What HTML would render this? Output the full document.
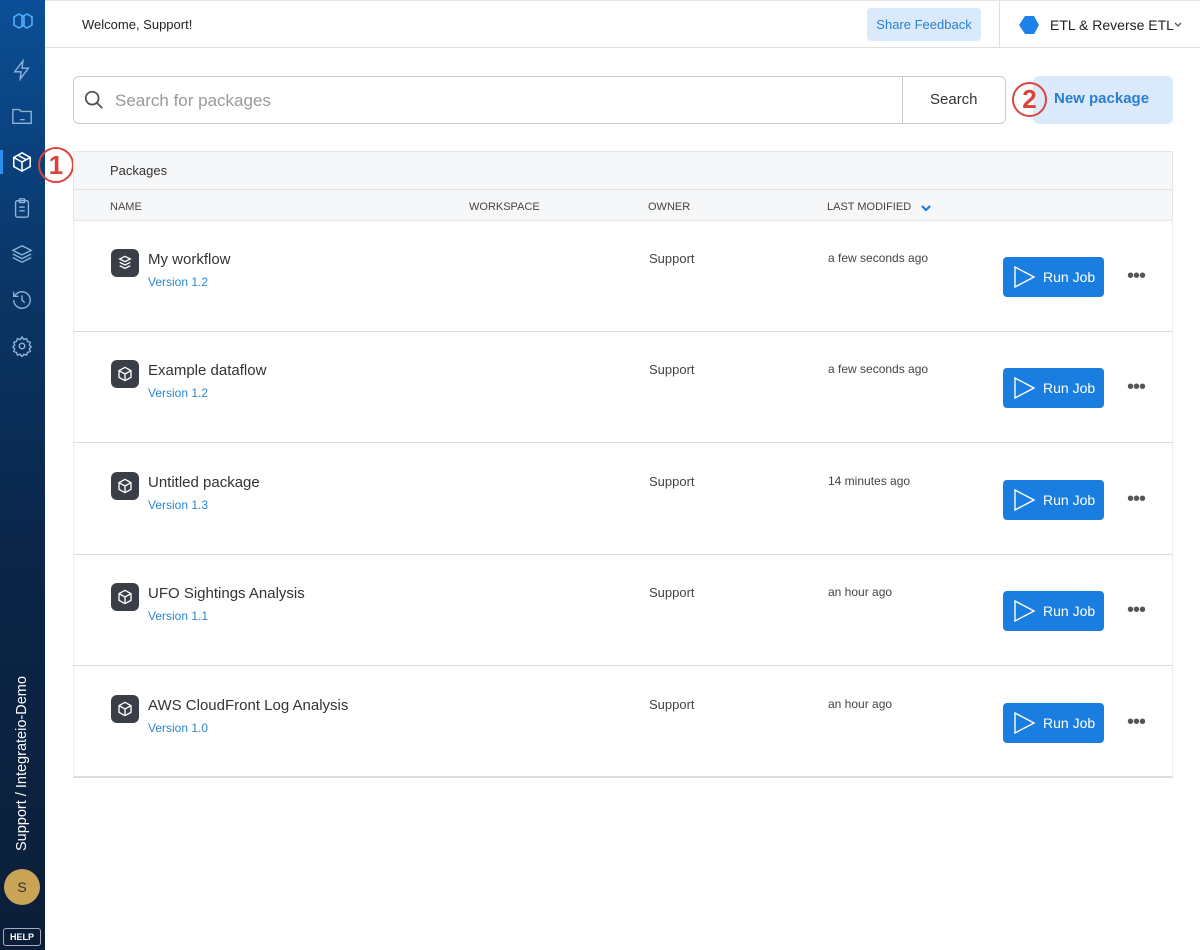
<!DOCTYPE html>
<html><head><style>
*{box-sizing:border-box;margin:0;padding:0}
body{width:1200px;height:950px;font-family:"Liberation Sans",sans-serif;background:#fff;position:relative;overflow:hidden;color:#333}
.side{position:absolute;left:0;top:0;width:45px;height:950px;background:linear-gradient(#0b4f96 0%,#0a3566 30%,#0b2547 60%,#0b1e38 100%)}
.side svg{position:absolute;left:11px}
.top{position:absolute;left:45px;top:0;right:0;height:48px;border-bottom:1px solid #ddd;border-top:1px solid #e5e5e5}
.abs{position:absolute}
.row{position:absolute;left:73px;width:1100px;height:112px;border-bottom:1px solid #ddd;border-left:1px solid #eee;border-right:1px solid #eee}
.ic{position:absolute;left:37px;top:29px;width:28px;height:28px;border-radius:6px;background:#3a3f47}
.ic svg{position:absolute;left:6px;top:6px}
.nm{position:absolute;left:74px;top:31px;font-size:15px;color:#333}
.ver{position:absolute;left:74px;top:55px;font-size:12px;color:#2a86d1}
.own{position:absolute;left:575px;top:31px;font-size:13px;color:#444}
.mod{position:absolute;left:754px;top:31px;font-size:12px;color:#444}
.run{position:absolute;left:929px;top:37px;width:101px;height:40px;background:#1a7de0;border-radius:4px;color:#fff;font-size:14px}
.run span{position:absolute;left:40px;top:12px}
.dots{position:absolute;left:1053px;top:52px;font-size:20px;color:#555;letter-spacing:-1px;line-height:8px}
</style></head><body>
<div class="side">
<svg style="top:12px" width="24" height="20" viewBox="0 0 24 20" fill="none" stroke="#4fb0ff" stroke-width="1.6"><path d="M8 2l5 3v8l-5 3-5-3V5z"/><path d="M16 2l5 3v8l-5 3-5-3V5z"/></svg>
<svg style="top:59px" width="22" height="22" viewBox="0 0 24 24" fill="none" stroke="#8fb3d9" stroke-width="1.5"><path d="M13 2L4 14h7l-1 8 9-12h-7z"/></svg>
<svg style="top:105px" width="22" height="22" viewBox="0 0 24 24" fill="none" stroke="#8fb3d9" stroke-width="1.5"><path d="M2 5h7l2 2h11v13H2z"/><path d="M10 16h5"/></svg>
<div class="abs" style="left:0;top:150px;width:3px;height:24px;background:#2a8ff0"></div>
<svg style="top:151px" width="22" height="22" viewBox="0 0 24 24" fill="none" stroke="#fff" stroke-width="1.7"><path d="M12 2l9 5v10l-9 5-9-5V7z"/><path d="M3 7l9 5 9-5M12 12v10M7.5 4.5l9 5"/></svg>
<svg style="top:197px" width="22" height="22" viewBox="0 0 24 24" fill="none" stroke="#8fb3d9" stroke-width="1.5"><rect x="5" y="4" width="14" height="18" rx="2"/><rect x="9" y="2" width="6" height="4" rx="1"/><path d="M9 11h6M9 15h6"/></svg>
<svg style="top:243px" width="22" height="22" viewBox="0 0 24 24" fill="none" stroke="#8fb3d9" stroke-width="1.5"><path d="M12 3l10 5-10 5L2 8z"/><path d="M2 12l10 5 10-5M2 16l10 5 10-5"/></svg>
<svg style="top:289px" width="22" height="22" viewBox="0 0 24 24" fill="none" stroke="#8fb3d9" stroke-width="1.5"><path d="M3 12a9 9 0 1 0 3-6.7L3 8"/><path d="M3 3v5h5M12 7v5l3 3"/></svg>
<svg style="top:335px" width="22" height="22" viewBox="0 0 24 24" fill="none" stroke="#8fb3d9" stroke-width="1.5"><circle cx="12" cy="12" r="3"/><path d="M12 2l2 3 3-1 1 3 3 1-1 3 2 2-2 2 1 3-3 1-1 3-3-1-2 3-2-3-3 1-1-3-3-1 1-3-2-2 2-2-1-3 3-1 1-3 3 1z"/></svg>
<div class="abs" style="left:14px;top:851px;transform:rotate(-90deg);transform-origin:0 0;white-space:nowrap;color:#fff;font-size:14.5px;line-height:17px">Support / Integrateio-Demo</div>
<div class="abs" style="left:4px;top:869px;width:36px;height:36px;border-radius:50%;background:#c9a356;color:#333;font-size:14px;text-align:center;line-height:36px">S</div>
<div class="abs" style="left:3px;top:928px;width:38px;height:18px;border:1px solid #aab;border-radius:3px;color:#fff;font-size:9px;font-weight:bold;text-align:center;line-height:16px">HELP</div>
</div>
<div class="top">
<div class="abs" style="left:37px;top:16px;font-size:13px;color:#222">Welcome, Support!</div>
<div class="abs" style="left:822px;top:7px;width:114px;height:33px;background:#dbeafb;border-radius:4px;color:#2a7fd0;font-size:13px;text-align:center;line-height:33px">Share Feedback</div>
<div class="abs" style="left:954px;top:0;width:1px;height:47px;background:#ddd"></div>
<div class="abs" style="left:974px;top:15px;width:20px;height:18px;background:#1e80ea;clip-path:polygon(30% 0,75% 0,100% 50%,75% 100%,30% 100%,0 50%)"></div>
<div class="abs" style="left:1005px;top:16px;font-size:14px;color:#222">ETL &amp; Reverse ETL</div>
<svg class="abs" style="left:1128px;top:20px" width="10" height="8" viewBox="0 0 10 8" fill="none" stroke="#555" stroke-width="1.3"><path d="M2 2l3 3 3-3"/></svg>
</div>
<div class="abs" style="left:73px;top:76px;width:933px;height:48px;border:1px solid #ccc;border-radius:6px"></div>
<svg class="abs" style="left:83px;top:89px" width="22" height="22" viewBox="0 0 24 24" fill="none" stroke="#555" stroke-width="2"><circle cx="10" cy="10" r="7"/><path d="M15 15l6 6"/></svg>
<div class="abs" style="left:115px;top:91px;font-size:17px;color:#999">Search for packages</div>
<div class="abs" style="left:902px;top:77px;width:1px;height:46px;background:#ccc"></div>
<div class="abs" style="left:930px;top:91px;font-size:15px;color:#333">Search</div>
<div class="abs" style="left:1033px;top:76px;width:140px;height:48px;background:#dbeafb;border-radius:6px"></div>
<div class="abs" style="left:1054px;top:90px;font-size:15px;font-weight:bold;color:#2a7fd0">New package</div>
<div class="abs" style="left:1012px;top:82px;width:35px;height:35px;border:2px solid #d9443a;border-radius:50%;color:#d9443a;font-size:26px;font-weight:bold;text-align:center;line-height:31px">2</div>
<div class="abs" style="left:38px;top:147px;width:36px;height:36px;border:2px solid #d9443a;border-radius:50%;color:#d9443a;font-size:26px;font-weight:bold;text-align:center;line-height:32px">1</div>
<div class="abs" style="left:73px;top:151px;width:1100px;height:70px;background:#f5f7f8;border:1px solid #e6e6e6"></div>
<div class="abs" style="left:73px;top:189px;width:1100px;height:1px;background:#e2e2e2"></div>
<div class="abs" style="left:110px;top:163px;font-size:13px;color:#333">Packages</div>
<div class="abs" style="left:110px;top:201px;font-size:11px;color:#444">NAME</div>
<div class="abs" style="left:469px;top:201px;font-size:11px;color:#444">WORKSPACE</div>
<div class="abs" style="left:648px;top:201px;font-size:11px;color:#444">OWNER</div>
<div class="abs" style="left:827px;top:201px;font-size:11px;color:#444">LAST MODIFIED</div>
<svg class="abs" style="left:920px;top:203px" width="12" height="10" viewBox="0 0 12 10" fill="none" stroke="#1a7de0" stroke-width="2.2"><path d="M2 3l4 4 4-4"/></svg>

<div class="row" style="top:220px"><div class="ic"><svg width="16" height="16" viewBox="0 0 24 24" fill="none" stroke="#fff" stroke-width="2"><path d="M12 2l8 4-8 4-8-4z"/><path d="M4 11l8 4 8-4M4 16l8 4 8-4"/></svg></div><div class="nm">My workflow</div><div class="ver">Version 1.2</div><div class="own">Support</div><div class="mod">a few seconds ago</div><div class="run"><svg class="abs" style="left:9px;top:8px" width="24" height="24" viewBox="0 0 24 24" fill="none" stroke="#fff" stroke-width="1.4"><path d="M3 2l19 10-19 10z"/></svg><span>Run Job</span></div><div class="dots">•••</div></div>
<div class="row" style="top:331px"><div class="ic"><svg width="16" height="16" viewBox="0 0 24 24" fill="none" stroke="#fff" stroke-width="2"><path d="M12 2l9 5v10l-9 5-9-5V7z"/><path d="M3 7l9 5 9-5M12 12v10"/></svg></div><div class="nm">Example dataflow</div><div class="ver">Version 1.2</div><div class="own">Support</div><div class="mod">a few seconds ago</div><div class="run"><svg class="abs" style="left:9px;top:8px" width="24" height="24" viewBox="0 0 24 24" fill="none" stroke="#fff" stroke-width="1.4"><path d="M3 2l19 10-19 10z"/></svg><span>Run Job</span></div><div class="dots">•••</div></div>
<div class="row" style="top:443px"><div class="ic"><svg width="16" height="16" viewBox="0 0 24 24" fill="none" stroke="#fff" stroke-width="2"><path d="M12 2l9 5v10l-9 5-9-5V7z"/><path d="M3 7l9 5 9-5M12 12v10"/></svg></div><div class="nm">Untitled package</div><div class="ver">Version 1.3</div><div class="own">Support</div><div class="mod">14 minutes ago</div><div class="run"><svg class="abs" style="left:9px;top:8px" width="24" height="24" viewBox="0 0 24 24" fill="none" stroke="#fff" stroke-width="1.4"><path d="M3 2l19 10-19 10z"/></svg><span>Run Job</span></div><div class="dots">•••</div></div>
<div class="row" style="top:554px"><div class="ic"><svg width="16" height="16" viewBox="0 0 24 24" fill="none" stroke="#fff" stroke-width="2"><path d="M12 2l9 5v10l-9 5-9-5V7z"/><path d="M3 7l9 5 9-5M12 12v10"/></svg></div><div class="nm">UFO Sightings Analysis</div><div class="ver">Version 1.1</div><div class="own">Support</div><div class="mod">an hour ago</div><div class="run"><svg class="abs" style="left:9px;top:8px" width="24" height="24" viewBox="0 0 24 24" fill="none" stroke="#fff" stroke-width="1.4"><path d="M3 2l19 10-19 10z"/></svg><span>Run Job</span></div><div class="dots">•••</div></div>
<div class="row" style="top:666px;border-bottom:2px solid #ddd"><div class="ic"><svg width="16" height="16" viewBox="0 0 24 24" fill="none" stroke="#fff" stroke-width="2"><path d="M12 2l9 5v10l-9 5-9-5V7z"/><path d="M3 7l9 5 9-5M12 12v10"/></svg></div><div class="nm">AWS CloudFront Log Analysis</div><div class="ver">Version 1.0</div><div class="own">Support</div><div class="mod">an hour ago</div><div class="run"><svg class="abs" style="left:9px;top:8px" width="24" height="24" viewBox="0 0 24 24" fill="none" stroke="#fff" stroke-width="1.4"><path d="M3 2l19 10-19 10z"/></svg><span>Run Job</span></div><div class="dots">•••</div></div>
</body></html>
